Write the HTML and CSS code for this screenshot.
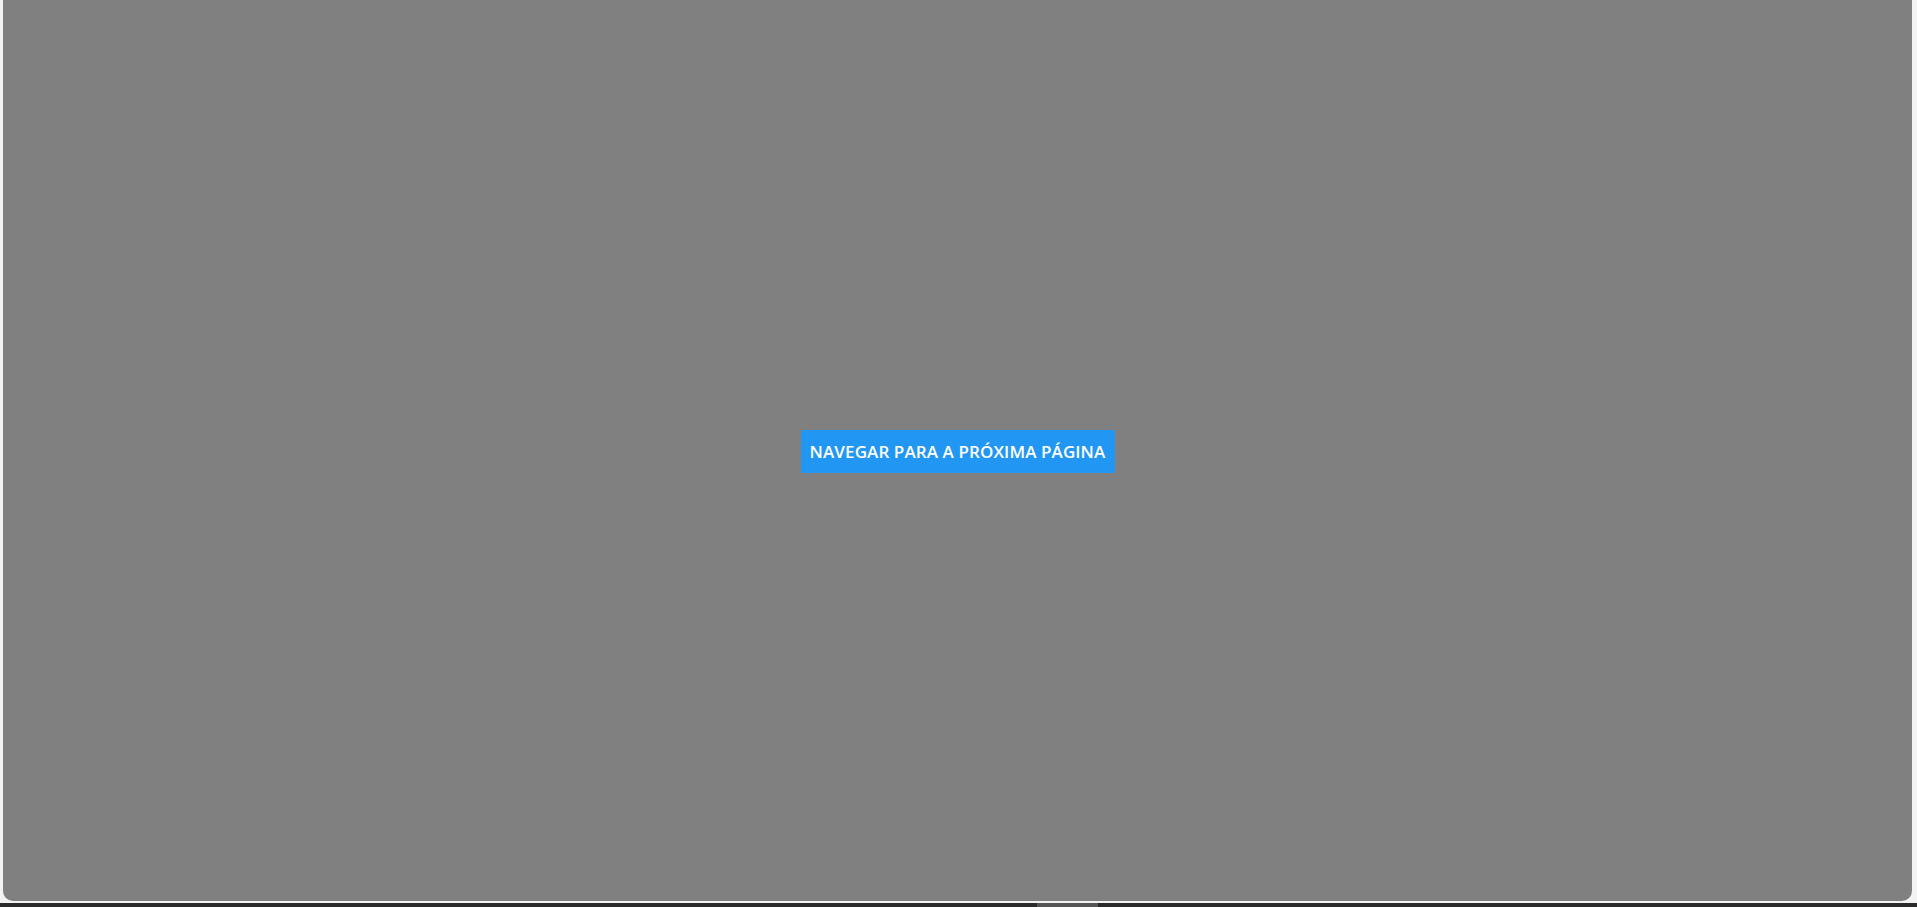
FILE: index.html
```html
<!DOCTYPE html>
<html lang="pt">
<head>
<meta charset="utf-8">
<title>Página</title>
<link rel="stylesheet" href="styles.css">
</head>
<body>
<div class="app">
  <main class="panel">
    <button class="nav-btn">NAVEGAR PARA A PRÓXIMA PÁGINA</button>
  </main>
  <div class="taskbar"><div class="thumb"></div></div>
</div>
</body>
</html>
```
FILE: styles.css
```css
html, body {
  margin: 0;
  padding: 0;
  height: 100%;
  overflow: hidden;
  background: #f3f3f3;
  font-family: "Open Sans", "Noto Sans", "Liberation Sans", sans-serif;
}
.app {
  height: 907px;
  display: flex;
  flex-direction: column;
}
.panel {
  margin: 0 5px 0 3px;
  height: 901px;
  background: #808080;
  border-radius: 0 0 10px 10px;
  display: flex;
  align-items: center;
  justify-content: center;
}
.nav-btn {
  margin-top: 2px;
  width: 314px;
  height: 43px;
  background: #2196f3;
  color: #fff;
  border: none;
  border-radius: 2px;
  font-family: "Open Sans", "Noto Sans", sans-serif;
  font-weight: 600;
  font-size: 17px;
  letter-spacing: 0.1px;
  padding: 0;
}
.taskbar {
  margin-top: auto;
  height: 4px;
  background: #2b2b2b;
  position: relative;
}
.thumb {
  position: absolute;
  left: 1037px;
  width: 61px;
  top: 0;
  bottom: 0;
  background: #555;
}
```
